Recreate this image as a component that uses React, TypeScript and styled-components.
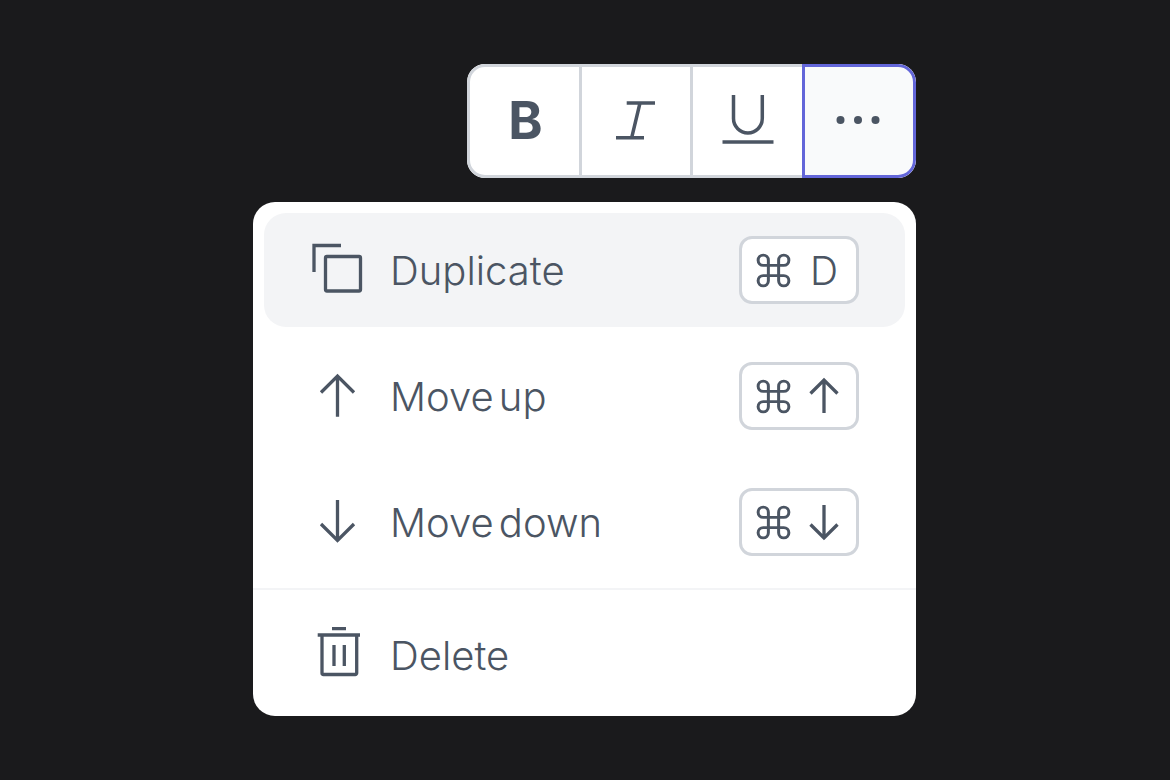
import React from 'react';
import styled, { createGlobalStyle } from 'styled-components';
import { Command } from 'lucide-react';

const GlobalStyle = createGlobalStyle`
    html, body {
        margin: 0;
        background: #1a1a1c;
    }
`;

const App: React.FC = () => {
    return (
        <Page>
            <GlobalStyle />
            <Stage>
                <Toolbar>
                    <ToolButton>
                        <BoldMark>B</BoldMark>
                    </ToolButton>
                    <ToolButton>
                        <ToolIcon viewBox="0 0 56 56">
                            <path d="M18.7 10H47M8 44.7H36M32 10l-8.300 34.700" />
                        </ToolIcon>
                    </ToolButton>
                    <ToolButton>
                        <ToolIcon viewBox="0 0 56 56">
                            <path d="M13.500 2v23.500a14.400 14.400 0 0 0 28.800 0V2M2.500 49h51" />
                        </ToolIcon>
                    </ToolButton>
                    <ToolButton $active>
                        <Dots viewBox="0 0 56 16">
                            <circle cx="10.500" cy="8" r="4" />
                            <circle cx="28" cy="8" r="4" />
                            <circle cx="45.500" cy="8" r="4" />
                        </Dots>
                    </ToolButton>
                </Toolbar>

                <Menu>
                    <MenuRows>
                        <MenuRow $highlighted>
                            <RowIcon viewBox="0 0 56 56">
                                <path d="M4 30V3.500H31" />
                                <rect x="15.500" y="14.500" width="35" height="34.500" rx="1.500" />
                            </RowIcon>
                            <RowLabel>Duplicate</RowLabel>
                            <Shortcut>
                                <CommandGlyph />
                                <ShortcutKey>D</ShortcutKey>
                            </Shortcut>
                        </MenuRow>
                        <MenuRow>
                            <RowIcon viewBox="0 0 56 56">
                                <path d="M27.500 48.700V8M11 24.500 27.500 8 44 24.500" />
                            </RowIcon>
                            <RowLabel>Move up</RowLabel>
                            <Shortcut>
                                <CommandGlyph />
                                <ShortcutKey>
                                    <ArrowGlyph viewBox="0 0 34 40">
                                        <path d="M17 37V4M3.500 17.500 17 4l13.500 13.500" />
                                    </ArrowGlyph>
                                </ShortcutKey>
                            </Shortcut>
                        </MenuRow>
                        <MenuRow>
                            <RowIcon viewBox="0 0 56 56">
                                <path d="M27.500 6v40.500M11 30l16.500 16.500L44 30" />
                            </RowIcon>
                            <RowLabel>Move down</RowLabel>
                            <Shortcut>
                                <CommandGlyph />
                                <ShortcutKey>
                                    <ArrowGlyph viewBox="0 0 34 40">
                                        <path d="M17 3v33M3.500 22.500 17 36l13.500-13.500" />
                                    </ArrowGlyph>
                                </ShortcutKey>
                            </Shortcut>
                        </MenuRow>
                    </MenuRows>
                    <Separator />
                    <DeleteRow>
                        <RowIcon viewBox="0 0 56 56">
                            <path d="M7.700 8H50M22 1.700H36M12 8v38a1.500 1.500 0 0 0 1.500 1.500h31.700a1.500 1.500 0 0 0 1.500-1.500V8M24 18v21M34.300 18v21" />
                        </RowIcon>
                        <RowLabel>Delete</RowLabel>
                    </DeleteRow>
                </Menu>
            </Stage>
        </Page>
    );
};

const Page = styled.div`
    width: 1170px;
    height: 780px;
    padding: 64px 0 0 253px;
    box-sizing: border-box;
    overflow: hidden;
    background: #1a1a1c;
    font-family: Inter, 'Noto Sans', sans-serif;
    color: #4b5563;
`;

const Stage = styled.div`
    width: 663px;
    display: flex;
    flex-direction: column;
    align-items: flex-end;
    gap: 24px;
`;

const Toolbar = styled.div`
    display: grid;
    grid-template-columns: 115px 111px 109px 114px;
    height: 114px;
    border-radius: 18px;
    overflow: hidden;
    background: #fff;
`;

const ToolButton = styled.div<{ $active?: boolean }>`
    display: flex;
    align-items: center;
    justify-content: center;
    box-sizing: border-box;
    background: ${({ $active }) => ($active ? '#f9fafb' : '#fff')};
    border: 3px solid ${({ $active }) => ($active ? '#6366d9' : '#d1d5db')};
    border-left-width: ${({ $active }) => ($active ? '3px' : '0')};
    border-radius: ${({ $active }) => ($active ? '0 18px 18px 0' : '0')};

    &:first-child {
        border-left-width: 3px;
        border-radius: 18px 0 0 18px;
    }
    &:nth-child(3) {
        border-right-width: 0;
    }
`;

const BoldMark = styled.span`
    margin-left: 2px;
    font-size: 52px;
    font-weight: 700;
    line-height: 1;
`;

const ToolIcon = styled.svg`
    width: 56px;
    height: 56px;
    fill: none;
    stroke: #4b5563;
    stroke-width: 3.5;
`;

const Dots = styled.svg`
    width: 56px;
    height: 16px;
    margin: -3px 0 0 -3px;
    fill: #4b5563;
`;

const Menu = styled.div`
    width: 663px;
    height: 514px;
    box-sizing: border-box;
    padding-top: 11px;
    border-radius: 22px;
    background: #fff;
`;

const MenuRows = styled.div`
    display: flex;
    flex-direction: column;
    gap: 12px;
    padding: 0 11px;
`;

const MenuRow = styled.div<{ $highlighted?: boolean }>`
    display: flex;
    align-items: center;
    height: 114px;
    padding: 0 46px;
    border-radius: 22px;
    background: ${({ $highlighted }) => ($highlighted ? '#f3f4f6' : 'transparent')};
`;

const DeleteRow = styled(MenuRow)`
    height: 104px;
    margin: 13px 11px 0;
`;

const RowIcon = styled.svg`
    flex: none;
    width: 56px;
    height: 56px;
    fill: none;
    stroke: #4b5563;
    stroke-width: 3.3;
`;

const RowLabel = styled.span`
    flex: 1;
    margin-left: 24px;
    padding-top: 2px;
    font-size: 40px;
    font-weight: 300;
    word-spacing: -6px;
    line-height: 1;
`;

const Shortcut = styled.div`
    display: flex;
    align-items: center;
    gap: 13px;
    width: 120px;
    height: 68px;
    box-sizing: border-box;
    padding-left: 11px;
    border: 3px solid #d1d5db;
    border-radius: 13px;
    background: #fff;
`;

const CommandGlyph = styled(Command).attrs({ size: 41, strokeWidth: 1.75 })`
    flex: none;
    color: #4b5563;
`;

const ShortcutKey = styled.span`
    display: flex;
    justify-content: center;
    width: 34px;
    font-size: 39px;
    font-weight: 300;
    line-height: 1;
`;

const ArrowGlyph = styled.svg`
    width: 34px;
    height: 40px;
    fill: none;
    stroke: #4b5563;
    stroke-width: 3.3;
`;

const Separator = styled.div`
    height: 2px;
    margin-top: 9px;
    background: #f3f4f6;
`;

export default App;
